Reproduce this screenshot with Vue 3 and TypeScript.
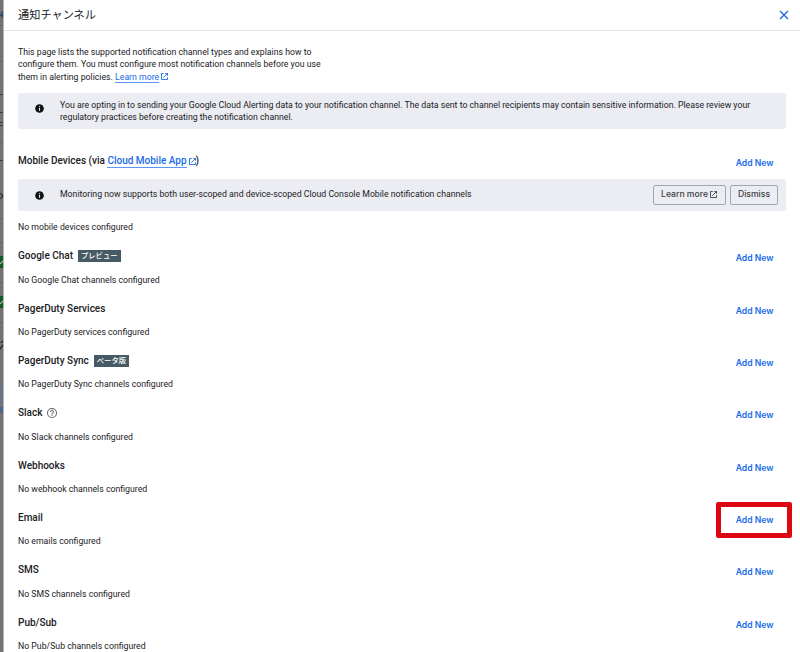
<script setup lang="ts">
interface Channel {
  title: string
  empty: string
  badge?: string
  help?: boolean
  highlight?: boolean
}

interface Slice {
  kind: string
  size: number
}

const channels: Channel[] = [
  { title: 'Google Chat', empty: 'No Google Chat channels configured', badge: 'プレビュー' },
  { title: 'PagerDuty Services', empty: 'No PagerDuty services configured' },
  { title: 'PagerDuty Sync', empty: 'No PagerDuty Sync channels configured', badge: 'ベータ版' },
  { title: 'Slack', empty: 'No Slack channels configured', help: true },
  { title: 'Webhooks', empty: 'No webhook channels configured' },
  { title: 'Email', empty: 'No emails configured', highlight: true },
  { title: 'SMS', empty: 'No SMS channels configured' },
  { title: 'Pub/Sub', empty: 'No Pub/Sub channels configured' },
]

// The sliver of the dimmed page that stays visible left of the panel
const slices: Slice[] = [
  { kind: 'plain', size: 10 },
  { kind: 'navy', size: 9 },
  { kind: 'plain', size: 6 },
  { kind: 'faint', size: 1 },
  { kind: 'plain', size: 35 },
  { kind: 'faint', size: 1 },
  { kind: 'plain', size: 32 },
  { kind: 'dark', size: 1 },
  { kind: 'plain', size: 17 },
  { kind: 'dark', size: 1 },
  { kind: 'plain', size: 9 },
  { kind: 'dark', size: 1 },
  { kind: 'plain', size: 2 },
  { kind: 'dark', size: 1 },
  { kind: 'plain', size: 16 },
  { kind: 'faint', size: 1 },
  { kind: 'plain', size: 17 },
  { kind: 'dark', size: 1 },
  { kind: 'plain', size: 31 },
  { kind: 'ring', size: 8 },
  { kind: 'plain', size: 18 },
  { kind: 'faint', size: 1 },
  { kind: 'plain', size: 23 },
  { kind: 'faint', size: 1 },
  { kind: 'plain', size: 13 },
  { kind: 'ok', size: 12 },
  { kind: 'plain', size: 14 },
  { kind: 'faint', size: 1 },
  { kind: 'plain', size: 13 },
  { kind: 'ok', size: 12 },
  { kind: 'plain', size: 14 },
  { kind: 'faint', size: 1 },
  { kind: 'plain', size: 17 },
  { kind: 'slash', size: 11 },
  { kind: 'plain', size: 31 },
  { kind: 'tint', size: 21 },
  { kind: 'plain', size: 4 },
  { kind: 'mark', size: 6 },
  { kind: 'plain', size: 239 },
]

const strokes: Record<string, string> = {
  navy: 'M0 7H3M2 2V10',
  ring: 'M0 2Q2.500 3 2.500 6Q2.500 9 0 10',
  ok: 'M0 8L4 4',
  slash: 'M0 10L3 5M1 3L3 1',
}
</script>

<template>
  <div class="screen">
    <div class="backdrop">
      <div
        v-for="(s, i) in slices"
        :key="i"
        class="slice"
        :class="s.kind"
        :style="{ height: s.size + 'px' }"
      >
        <svg v-if="strokes[s.kind]" viewBox="0 0 3 12" preserveAspectRatio="none"><path :d="strokes[s.kind]" /></svg>
      </div>
    </div>
    <main class="panel">
      <header class="top">
        <h1>通知チャンネル</h1>
        <svg class="close" viewBox="0 0 10 10"><path d="M1 1L9 9M9 1L1 9" /></svg>
      </header>

      <div class="content">
        <p class="intro">
          <span>This page lists the supported notification channel types and explains how to</span>
          <span>configure them. You must configure most notification channels before you use</span>
          <span>them in alerting policies. <a class="link">Learn more</a><svg class="ext" viewBox="0 0 24 24"><path d="M10 4H4v16h16v-6M14 4h6v6M20 4L9 15" /></svg></span>
        </p>

        <div class="notice first">
          <svg class="info" viewBox="0 0 24 24"><circle cx="12" cy="12" r="11.5" /><path d="M10.600 10.500h2.900v7.500h-2.900zM10.600 6h2.900v2.800h-2.900z" /></svg>
          <p>
            <span>You are opting in to sending your Google Cloud Alerting data to your notification channel. The data sent to channel recipients may contain sensitive information. Please review your</span>
            <span>regulatory practices before creating the notification channel.</span>
          </p>
        </div>

        <section class="mobile">
          <div class="row">
            <h2>Mobile Devices (via <a class="link">Cloud Mobile App</a><svg class="ext" viewBox="0 0 24 24"><path d="M10 4H4v16h16v-6M14 4h6v6M20 4L9 15" /></svg>)</h2>
            <button class="add">Add New</button>
          </div>
          <div class="notice second">
            <svg class="info" viewBox="0 0 24 24"><circle cx="12" cy="12" r="11.5" /><path d="M10.600 10.500h2.900v7.500h-2.900zM10.600 6h2.900v2.800h-2.900z" /></svg>
            <p><span>Monitoring now supports both user-scoped and device-scoped Cloud Console Mobile notification channels</span></p>
            <div class="actions">
              <button class="outlined more">Learn more<svg class="ext" viewBox="0 0 24 24"><path d="M10 4H4v16h16v-6M14 4h6v6M20 4L9 15" /></svg></button>
              <button class="outlined dismiss">Dismiss</button>
            </div>
          </div>
          <p class="empty">No mobile devices configured</p>
        </section>

        <section v-for="c in channels" :key="c.title" class="channel">
          <div class="row">
            <h2>
              <span>{{ c.title }}</span>
              <span v-if="c.badge" class="badge">{{ c.badge }}</span>
              <svg v-if="c.help" class="help" viewBox="0 0 24 24"><path d="M11 18h2v-2h-2zM12 2a10 10 0 1 0 0 20 10 10 0 0 0 0-20zm0 18a8 8 0 1 1 0-16 8 8 0 0 1 0 16zm0-14a4 4 0 0 0-4 4h2a2 2 0 1 1 4 0c0 2-3 1.750-3 5h2c0-2.250 3-2.500 3-5a4 4 0 0 0-4-4z" /></svg>
            </h2>
            <button class="add" :class="{ highlight: c.highlight }">Add New</button>
          </div>
          <p class="empty">{{ c.empty }}</p>
        </section>
      </div>
    </main>
  </div>
</template>

<style>
body {
  margin: 0;
  overflow: hidden;
}
</style>

<style scoped>
.screen {
  display: flex;
  width: 800px;
  height: 652px;
  overflow: hidden;
  background: #fff;
  color: #202124;
  font-family: Roboto, "Noto Sans CJK JP", sans-serif;
}
h1, h2, p {
  margin: 0;
}
button {
  padding: 0;
  border: 0;
  background: none;
  font-family: Inter, sans-serif;
}
.backdrop {
  flex: none;
  width: 3px;
  overflow: hidden;
  background: #747474;
  border-right: 1px solid #b5b5b5;
}
.slice svg {
  display: block;
  width: 3px;
  height: 100%;
  fill: none;
  stroke: #222;
  stroke-width: 1.2;
}
.faint { background: #666; }
.dark { background: #3c3c3c; }
.tint { background: #6b7482; }
.mark { background: #4a6694; }
.ok { background: #0c5d24; }
.ok svg { stroke: #a7b9ab; }
.navy svg { stroke: #18385f; }
.panel {
  flex: 1;
  min-width: 0;
}
.top {
  display: flex;
  align-items: center;
  justify-content: space-between;
  box-sizing: border-box;
  height: 31px;
  padding: 0 11.5px 0 14px;
  border-bottom: 1px solid #e4e5e7;
}
.top h1 {
  padding-top: 1px;
  font-size: 11.2px;
  font-weight: 400;
  line-height: 16px;
}
.close {
  width: 10px;
  height: 10px;
  fill: none;
  stroke: #1a6ddf;
  stroke-width: 1.4;
}
.content {
  padding: 15px 14px 0;
}
.intro, .notice p {
  font-size: 8.73px;
  line-height: 12.5px;
}
.intro { margin-top: -0.5px; }
.intro span, .notice p span {
  display: block;
  white-space: nowrap;
}
.link {
  color: #186ce8;
  border-bottom: 1px solid #5c97ee;
}
.ext {
  flex: none;
  width: 9px;
  height: 9px;
  fill: none;
  stroke: #186ce8;
  stroke-width: 2.4;
}
.intro .link {
  display: inline-block;
  height: 10px;
  line-height: 10px;
}
.intro .ext {
  margin-left: 1px;
  vertical-align: -1px;
}
.notice {
  display: flex;
  align-items: center;
  box-sizing: border-box;
  padding-left: 17px;
  border-radius: 2px;
  background: #ecedf2;
}
.info {
  flex: none;
  width: 9px;
  height: 9px;
  margin-right: 16px;
  fill: #111214;
}
.info path { fill: #ecedf2; }
.first {
  height: 36px;
  margin-top: 10px;
}
.first .info { margin-bottom: 5px; }
.second { height: 32px; }
.second p { padding-bottom: 1px; }
.row {
  display: flex;
  align-items: flex-start;
  justify-content: space-between;
  padding-right: 12.5px;
}
.row h2 {
  display: flex;
  align-items: center;
  height: 14px;
  font-size: 10px;
  font-weight: 500;
  line-height: 14px;
  white-space: pre;
}
.row h2 .ext {
  margin: 0 -1px 0 1px;
}
.row h2 .link {
  margin-top: 1px;
  line-height: 12px;
}
.add {
  position: relative;
  height: 12px;
  margin-top: 3px;
  color: #186ce8;
  font-size: 8.65px;
  font-weight: 600;
  line-height: 12px;
}
.mobile {
  height: 120.4px;
  padding-top: 25px;
  box-sizing: border-box;
}
.mobile > .row { height: 25px; }
.mobile .empty { margin-top: 10px; }
.actions {
  display: flex;
  gap: 4px;
  margin-left: auto;
  padding: 0 8px 1px 0;
}
.outlined {
  display: flex;
  align-items: center;
  justify-content: center;
  box-sizing: border-box;
  height: 20px;
  padding-bottom: 1px;
  border: 1px solid #a3a6ac;
  border-radius: 2px;
  color: #3c4043;
  font-size: 8.65px;
  font-weight: 500;
}
.more { width: 73px; }
.dismiss { width: 48px; }
.outlined .ext {
  margin-left: 1px;
  stroke: #3c4043;
}
.empty {
  height: 12px;
  font-size: 8.73px;
  line-height: 12px;
}
.channel {
  box-sizing: border-box;
  height: 52.35px;
}
.channel .row { height: 24.2px; }
.badge {
  height: 12px;
  margin-left: 5px;
  padding: 0 3px;
  background: #455a64;
  color: #fff;
  font-size: 7.3px;
  font-weight: 500;
  line-height: 12px;
}
.help {
  width: 12px;
  height: 12px;
  margin-left: 4px;
  fill: #5f6368;
}
.highlight::after {
  position: absolute;
  top: -12px;
  right: -18px;
  bottom: -12px;
  left: -20px;
  border: 5px solid #dc0711;
  border-radius: 2px;
  content: "";
}
</style>
